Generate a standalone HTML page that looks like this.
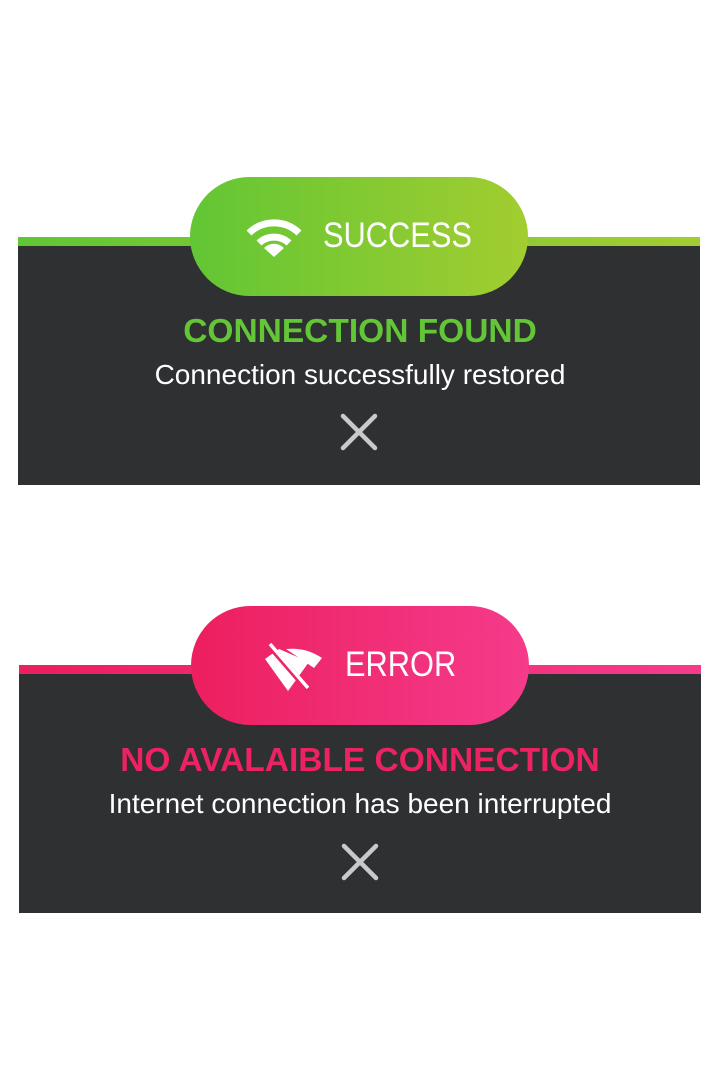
<!DOCTYPE html><html><head><style>
body{margin:0;width:720px;height:1092px;background:#fff;position:relative;font-family:"Liberation Sans",Arial,sans-serif;overflow:hidden}
.line{position:absolute;height:9px}
.panel{position:absolute;background:#2f3032}
.pill{position:absolute;width:338px;height:119px;border-radius:60px;color:#fff;font-size:35px;display:flex;align-items:center}
.pill span{transform-origin:left center}
.t{position:absolute;width:720px;text-align:center;font-weight:bold;font-size:33.5px;line-height:38px}
.s{position:absolute;width:720px;text-align:center;color:#fff;font-size:28px;line-height:32px}
</style></head><body>
<div class="line" style="left:18px;top:237px;width:682px;background:linear-gradient(90deg,#62c634,#a2cd30)"></div>
<div class="panel" style="left:18px;top:246px;width:682px;height:239px"></div>
<div class="pill" style="left:190px;top:177px;background:linear-gradient(90deg,#62c634,#a2cd30)">
<svg style="position:absolute;left:56px;top:37px" width="56" height="46" viewBox="0 0 56 46">
<path d="M3 19 A36 36 0 0 1 53 19" stroke="#fff" stroke-width="7" fill="none"/>
<path d="M13 29 A22 22 0 0 1 43 29" stroke="#fff" stroke-width="7" fill="none"/>
<path d="M18 34 L28 43 L38 34 A14 14 0 0 0 18 34Z" fill="#fff"/>
</svg>
<span style="position:absolute;left:133px;top:39px;transform:scaleX(0.88)">SUCCESS</span></div>
<div class="t" style="top:313px;color:#63c636">CONNECTION FOUND</div>
<div class="s" style="top:359px">Connection successfully restored</div>
<svg style="position:absolute;left:338px;top:411px" width="42" height="42"><path d="M5 5L37 37M37 5L5 37" stroke="#c9c9c9" stroke-width="4.5" stroke-linecap="round"/></svg>

<div class="line" style="left:19px;top:665px;width:682px;background:linear-gradient(90deg,#ec1f5f,#f53b8b)"></div>
<div class="panel" style="left:19px;top:674px;width:682px;height:239px"></div>
<div class="pill" style="left:191px;top:606px;background:linear-gradient(90deg,#ec1f5f,#f53b8b)">
<svg style="position:absolute;left:73px;top:37px" width="62" height="52" viewBox="0 0 62 52">
<path d="M1 16 L24 48 L45 19 L15 6 Z" fill="#fff"/>
<path d="M22 6 Q42 4 58 15 L50 25 Z" fill="#fff"/>
<path d="M5 2 L45 48" stroke="#ec2566" stroke-width="6"/>
<path d="M6 1 L44 45" stroke="#fff" stroke-width="3.5"/>
</svg>
<span style="position:absolute;left:154px;top:39px;transform:scaleX(0.88)">ERROR</span></div>
<div class="t" style="top:742px;color:#ec2263">NO AVALAIBLE CONNECTION</div>
<div class="s" style="top:788px">Internet connection has been interrupted</div>
<svg style="position:absolute;left:339px;top:841px" width="42" height="42"><path d="M5 5L37 37M37 5L5 37" stroke="#c9c9c9" stroke-width="4.5" stroke-linecap="round"/></svg>
</body></html>
